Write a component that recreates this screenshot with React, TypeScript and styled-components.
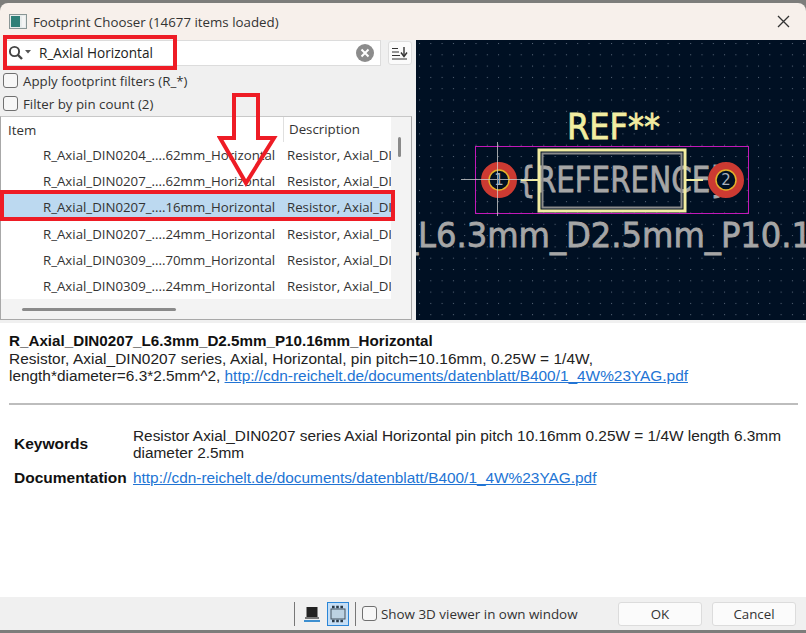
import React from "react";
import styled, { createGlobalStyle } from "styled-components";

const rows = [
  { item: "R_Axial_DIN0204_....62mm_Horizontal" },
  { item: "R_Axial_DIN0207_....62mm_Horizontal" },
  { item: "R_Axial_DIN0207_....16mm_Horizontal", selected: true },
  { item: "R_Axial_DIN0207_....24mm_Horizontal" },
  { item: "R_Axial_DIN0309_....70mm_Horizontal" },
  { item: "R_Axial_DIN0309_....24mm_Horizontal" },
];

const docUrl = "http://cdn-reichelt.de/documents/datenblatt/B400/1_4W%23YAG.pdf";
const pcbFont = "'DejaVu Sans', sans-serif";

const App: React.FC = () => {
  return (
    <Page>
      <GlobalStyle />
      <TopEdge />
      <TitleBar>
        <AppIcon>
          <svg width="18" height="15" viewBox="0 0 18 15">
            <rect x="0.5" y="0.5" width="17" height="14" fill="#e8ecec" stroke="#8a9696" />
            <rect x="2" y="2" width="9" height="11" fill="#2f7f78" />
            <rect x="13" y="2" width="3" height="11" fill="#f4f4f4" />
          </svg>
        </AppIcon>
        <TitleText>Footprint Chooser (14677 items loaded)</TitleText>
        <CloseIcon>
          <svg width="13" height="13" viewBox="0 0 13 13">
            <path d="M1 1 L12 12 M12 1 L1 12" stroke="#333" strokeWidth="1.3" fill="none" />
          </svg>
        </CloseIcon>
      </TitleBar>

      <Upper>
        <LeftPane>
          <SearchRow>
            <SearchBox>
              <svg width="24" height="16" viewBox="0 0 24 16">
                <circle cx="6.5" cy="6.5" r="4.6" fill="none" stroke="#444" strokeWidth="1.9" />
                <path d="M10 10 L14 14" stroke="#444" strokeWidth="2.4" />
                <path d="M17 5 L23 5 L20 8.5 Z" fill="#555" />
              </svg>
              <SearchText>R_Axial Horizontal</SearchText>
              <ClearIcon>
                <svg width="18" height="18" viewBox="0 0 18 18">
                  <circle cx="9" cy="9" r="9" fill="#8c8c8c" />
                  <path d="M5.5 5.5 L12.5 12.5 M12.5 5.5 L5.5 12.5" stroke="#fff" strokeWidth="2" />
                </svg>
              </ClearIcon>
            </SearchBox>
            <SortButton>
              <svg width="16" height="14" viewBox="0 0 16 14">
                <path d="M0 2.5 H6 M0 6 H7 M0 9.5 H8 M0 13 H15" stroke="#333" strokeWidth="1.2" />
                <path d="M12 1 V9" stroke="#333" strokeWidth="1.4" />
                <path d="M9 6.5 L12 10.5 L15 6.5" stroke="#333" strokeWidth="1.4" fill="none" />
              </svg>
            </SortButton>
          </SearchRow>

          <CheckRow>
            <CheckBox />
            <span>Apply footprint filters (R_*)</span>
          </CheckRow>
          <CheckRow>
            <CheckBox />
            <span>Filter by pin count (2)</span>
          </CheckRow>

          <ListFrame>
            <ListBody>
              <ListMain>
                <ListHeader>
                  <ItemHead>Item</ItemHead>
                  <DescHead>Description</DescHead>
                </ListHeader>
                {rows.map((row) => (
                  <Row key={row.item + String(row.selected)} $selected={row.selected}>
                    <ItemCell>{row.item}</ItemCell>
                    <DescCell>Resistor, Axial_DI</DescCell>
                  </Row>
                ))}
              </ListMain>
              <VScroll>
                <VThumb />
              </VScroll>
            </ListBody>
            <HScroll>
              <HThumb />
            </HScroll>
          </ListFrame>
        </LeftPane>

        <Canvas>
          <svg width="390" height="280" viewBox="0 0 390 280">
            <defs>
              <pattern id="grid" x="3" y="3" width="11.3" height="11.3" patternUnits="userSpaceOnUse">
                <rect width="1" height="1" fill="#5d6b7d" />
              </pattern>
            </defs>
            <rect width="390" height="280" fill="#001023" />
            <rect width="390" height="280" fill="url(#grid)" />
            <text x="151" y="99" fontFamily={pcbFont} fontSize="35" fill="#f2eda1" stroke="#f2eda1" strokeWidth="0.8" textLength="93" lengthAdjust="spacingAndGlyphs">
              REF**
            </text>
            <rect x="59.5" y="106.5" width="273" height="67" fill="none" stroke="#c218b8" strokeWidth="1" />
            <text x="101" y="152" fontFamily={pcbFont} fontSize="35" fill="#a6a6a6" stroke="#a6a6a6" strokeWidth="0.8" textLength="212" lengthAdjust="spacingAndGlyphs">
              {"{REFERENCE}"}
            </text>
            <text x="-14" y="207" fontFamily={pcbFont} fontSize="34" fill="#a6a6a6" stroke="#a6a6a6" strokeWidth="0.8" textLength="410" lengthAdjust="spacingAndGlyphs">
              _L6.3mm_D2.5mm_P10.1
            </text>
            <rect x="123" y="110" width="146" height="61" fill="none" stroke="#f2eda1" strokeWidth="3" />
            <rect x="126.5" y="113.5" width="139" height="54" fill="none" stroke="#8b8b8b" strokeWidth="2" />
            <path d="M105 140 H122 M270 140 H287" stroke="#f2eda1" strokeWidth="2" />
            <circle cx="83" cy="140" r="14" fill="none" stroke="#cc3a32" strokeWidth="8" />
            <circle cx="83" cy="140" r="10" fill="#001023" stroke="#e3b22a" strokeWidth="1.5" />
            <circle cx="310" cy="140" r="14" fill="none" stroke="#cc3a32" strokeWidth="8" />
            <circle cx="310" cy="140" r="10" fill="#001023" stroke="#e3b22a" strokeWidth="1.5" />
            <path d="M45 139.5 H117 M81.5 102 V176" stroke="#d4d4d4" strokeWidth="1" opacity="0.75" />
            <text x="83" y="145" fontFamily={pcbFont} fontSize="15" fill="#a9b1bd" textAnchor="middle">1</text>
            <text x="310" y="145" fontFamily={pcbFont} fontSize="15" fill="#a9b1bd" textAnchor="middle">2</text>
          </svg>
        </Canvas>
      </Upper>

      <Sash />

      <Details>
        <DetailTitle>R_Axial_DIN0207_L6.3mm_D2.5mm_P10.16mm_Horizontal</DetailTitle>
        <DetailLine $spacing={0.06}>Resistor, Axial_DIN0207 series, Axial, Horizontal, pin pitch=10.16mm, 0.25W = 1/4W,</DetailLine>
        <DetailLine>
          length*diameter=6.3*2.5mm^2, <DocLink href="#">{docUrl}</DocLink>
        </DetailLine>
        <Rule />
        <InfoTable>
          <InfoLabel>Keywords</InfoLabel>
          <InfoValue>
            Resistor Axial_DIN0207 series Axial Horizontal pin pitch 10.16mm 0.25W = 1/4W length 6.3mm diameter 2.5mm
          </InfoValue>
          <InfoLabel>Documentation</InfoLabel>
          <InfoValue>
            <DocLink href="#">{docUrl}</DocLink>
          </InfoValue>
        </InfoTable>
      </Details>

      <Footer>
        <Divider />
        <ToolIcon>
          <svg width="16" height="18" viewBox="0 0 16 18">
            <rect x="2.5" y="2" width="11" height="10" fill="#222" />
            <rect x="1" y="12" width="14" height="2" fill="#777" />
            <rect x="0" y="15" width="16" height="2" fill="#3d8fd0" />
          </svg>
        </ToolIcon>
        <ToolIcon $active>
          <svg width="18" height="18" viewBox="0 0 18 18">
            <rect x="2" y="4" width="14" height="10" fill="#bcd2e2" stroke="#44525e" strokeWidth="1" />
            <path d="M3 2 H15 M3 16 H15" stroke="#2a3a48" strokeWidth="2.4" strokeDasharray="2.6 1.6" />
          </svg>
        </ToolIcon>
        <Divider />
        <FooterCheck>
          <CheckBox />
          <span>Show 3D viewer in own window</span>
        </FooterCheck>
        <DialogButton $width={84}>OK</DialogButton>
        <DialogButton $width={84}>Cancel</DialogButton>
      </Footer>
      <BottomEdge />

      {/* red annotations drawn over the dialog */}
      <SearchMark />
      <RowMark />
      <ArrowMark>
        <svg width="64" height="96" viewBox="0 0 64 96">
          <path d="M17 2 H41 V45 H57 L29 90 L3 45 H17 Z" fill="none" stroke="#ee1c25" strokeWidth="4" />
        </svg>
      </ArrowMark>
    </Page>
  );
};

const GlobalStyle = createGlobalStyle`
  html, body {
    margin: 0;
    padding: 0;
    background: #f0f0f0;
  }
`;

const Page = styled.div`
  position: relative;
  width: 806px;
  height: 633px;
  overflow: hidden;
  display: flex;
  flex-direction: column;
  font-family: "Open Sans", "Noto Sans", sans-serif;
  font-size: 13.3px;
  color: #222;
  background: #7d7d7b;
`;

const TopEdge = styled.div`
  height: 3px;
  flex: none;
`;

const TitleBar = styled.div`
  height: 37px;
  flex: none;
  display: flex;
  align-items: center;
  padding: 0 16px 0 9px;
  background: #f7f0eb;
  box-sizing: border-box;
  border-radius: 8px 8px 0 0;
`;

const AppIcon = styled.span`
  display: flex;
  margin-right: 6px;
`;

const TitleText = styled.span`
  font-size: 13.3px;
  color: #333;
`;

const CloseIcon = styled.span`
  display: flex;
  margin-left: auto;
`;

const Upper = styled.div`
  height: 280px;
  flex: none;
  display: flex;
`;

const LeftPane = styled.div`
  width: 416px;
  flex: none;
  background: #f0f0f0;
  display: flex;
  flex-direction: column;
`;

const SearchRow = styled.div`
  display: flex;
  align-items: flex-start;
  gap: 7px;
  padding: 0 4px 0 4px;
  height: 29px;
  flex: none;
`;

const SearchBox = styled.div`
  position: relative;
  width: 377px;
  height: 26px;
  box-sizing: border-box;
  display: flex;
  align-items: center;
  padding-left: 3px;
  background: #fff;
  border: 1px solid #dcdcdc;
`;

const SearchText = styled.span`
  margin: 0 0 2px 7px;
  font-size: 13.6px;
  color: #222;
`;

const ClearIcon = styled.span`
  display: flex;
  margin-left: auto;
  margin-right: 6px;
`;

const SortButton = styled.div`
  width: 24px;
  height: 24px;
  margin-top: 1px;
  box-sizing: border-box;
  display: flex;
  align-items: center;
  justify-content: center;
  background: #fbfbfb;
  border: 1px solid #dedede;
  border-radius: 3px;
`;

const CheckRow = styled.label`
  display: flex;
  align-items: center;
  gap: 5px;
  height: 23px;
  padding-left: 3px;
  flex: none;
  font-size: 13.3px;
  color: #333;
`;

const CheckBox = styled.span`
  display: block;
  width: 15px;
  height: 15px;
  box-sizing: border-box;
  background: #f7f7f7;
  border: 1px solid #707070;
  border-radius: 3px;
  flex: none;
`;

const ListFrame = styled.div`
  margin-top: 1px;
  width: 412px;
  height: 204px;
  box-sizing: border-box;
  background: #f3f3f3;
  border: 1px solid #a8a8a8;
  border-top-color: #c8c8c8;
  display: flex;
  flex-direction: column;
  flex: none;
`;

const ListBody = styled.div`
  height: 182px;
  flex: none;
  display: flex;
`;

const ListMain = styled.div`
  width: 390px;
  flex: none;
  background: #fff;
  overflow: hidden;
`;

const ListHeader = styled.div`
  height: 25px;
  display: flex;
  align-items: center;
  font-size: 13.3px;
  color: #333;
`;

const ItemHead = styled.div`
  width: 282px;
  box-sizing: border-box;
  padding-left: 7px;
`;

const DescHead = styled.div`
  height: 25px;
  line-height: 25px;
  padding-left: 5px;
  border-left: 1px solid #e0e0e0;
`;

const Row = styled.div<{ $selected?: boolean }>`
  height: 26.2px;
  display: flex;
  align-items: center;
  white-space: nowrap;
  font-size: 13.25px;
  color: #333;
  background: ${(p) => (p.$selected ? "#bcd9f0" : "#fff")};
`;

const ItemCell = styled.div`
  width: 286px;
  box-sizing: border-box;
  padding-left: 42px;
  flex: none;
`;

const DescCell = styled.div`
  flex: none;
`;

const VScroll = styled.div`
  flex: 1;
  position: relative;
`;

const VThumb = styled.div`
  width: 3px;
  height: 20px;
  margin: 20px 0 0 7px;
  background: #8a8a8a;
  border-radius: 2px;
`;

const HScroll = styled.div`
  flex: 1;
  display: flex;
  align-items: center;
`;

const HThumb = styled.div`
  width: 154px;
  height: 3px;
  margin-left: 21px;
  background: #8a8a8a;
  border-radius: 2px;
`;

const Canvas = styled.div`
  flex: 1;
  background: #001023;
  svg {
    display: block;
  }
`;

const Sash = styled.div`
  height: 3px;
  flex: none;
  background: #f0f0f0;
`;

const Details = styled.div`
  height: 274px;
  flex: none;
  box-sizing: border-box;
  padding: 9px 8px 0 9px;
  background: #fff;
  font-family: "Liberation Sans", Arial, sans-serif;
  font-size: 15.4px;
  line-height: 17.5px;
  color: #222;
`;

const DetailTitle = styled.div`
  font-weight: 700;
  font-size: 15.2px;
  color: #111;
`;

const DetailLine = styled.div<{ $spacing?: number }>`
  white-space: nowrap;
  letter-spacing: ${(p) => p.$spacing ?? 0}px;
`;

const DocLink = styled.a`
  color: #2274d4;
  text-decoration: underline;
`;

const Rule = styled.div`
  height: 2px;
  margin-top: 18px;
  background: #bdbdbd;
`;

const InfoTable = styled.div`
  display: grid;
  grid-template-columns: 119px 1fr;
  align-items: center;
  row-gap: 7px;
  margin: 22px 0 0 5px;
  padding-right: 8px;
`;

const InfoLabel = styled.div`
  font-weight: 700;
  font-size: 15.5px;
  color: #111;
`;

const InfoValue = styled.div`
  line-height: 17.5px;
`;

const Footer = styled.div`
  height: 33px;
  flex: none;
  display: flex;
  align-items: center;
  padding: 0 0 0 294px;
  background: #f0f0f0;
  color: #333;
`;

const Divider = styled.div`
  width: 1px;
  height: 24px;
  background: #777;
  flex: none;
`;

const ToolIcon = styled.div<{ $active?: boolean }>`
  width: 24px;
  height: 24px;
  margin-left: ${(p) => (p.$active ? "4px" : "6px")};
  margin-right: ${(p) => (p.$active ? "6px" : "0")};
  box-sizing: border-box;
  display: flex;
  align-items: center;
  justify-content: center;
  background: ${(p) => (p.$active ? "#c5def5" : "transparent")};
  border: 1px solid ${(p) => (p.$active ? "#2a86d8" : "transparent")};
`;

const FooterCheck = styled.label`
  display: flex;
  align-items: center;
  gap: 4px;
  margin-left: 6px;
  width: 256px;
  flex: none;
  font-size: 13.4px;
`;

const DialogButton = styled.div<{ $width: number }>`
  width: ${(p) => p.$width}px;
  height: 24px;
  margin-right: 10px;
  box-sizing: border-box;
  display: flex;
  align-items: center;
  justify-content: center;
  background: #fbfbfb;
  border: 1px solid #dcdcdc;
  border-radius: 3px;
  font-size: 13.3px;
  flex: none;
`;

const BottomEdge = styled.div`
  flex: 1;
`;

const SearchMark = styled.div`
  position: absolute;
  left: 3px;
  top: 35px;
  width: 174px;
  height: 35px;
  box-sizing: border-box;
  border: 4px solid #ee1c25;
  pointer-events: none;
`;

const RowMark = styled.div`
  position: absolute;
  left: 0;
  top: 190px;
  width: 395px;
  height: 31px;
  box-sizing: border-box;
  border: 4px solid #ee1c25;
  pointer-events: none;
`;

const ArrowMark = styled.div`
  position: absolute;
  left: 217px;
  top: 93px;
  pointer-events: none;
`;

export default App;
